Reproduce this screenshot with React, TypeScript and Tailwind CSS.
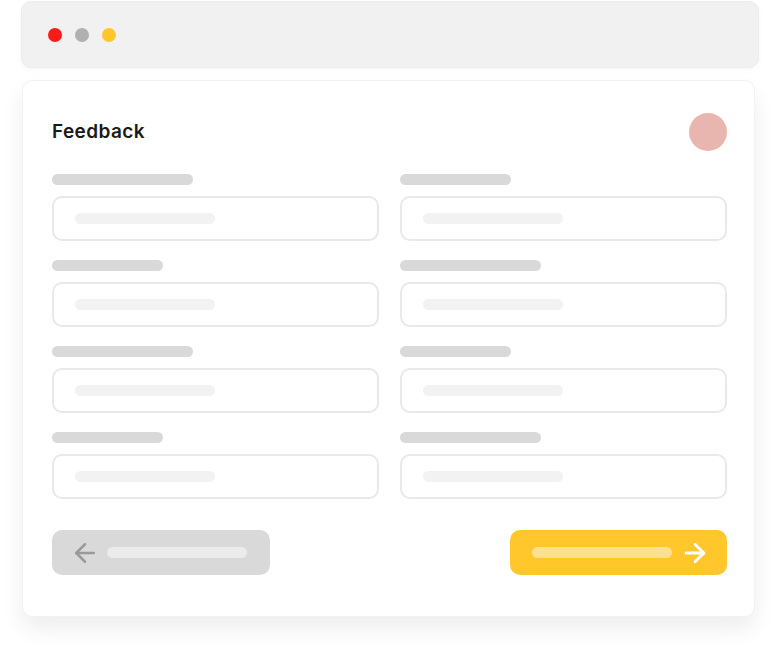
import { ArrowLeft, ArrowRight } from "lucide-react";

const rows = [
  { left: 141, right: 111 },
  { left: 111, right: 141 },
  { left: 141, right: 111 },
  { left: 111, right: 141 },
];

function Field({ label }: { label: number }) {
  return (
    <div className="flex flex-col gap-[11px]">
      <div className="h-[11px] rounded-full bg-[#d9d9d9]" style={{ width: label }} />
      <div className="h-[45px] rounded-[10px] border-2 border-[#e9e9e9] bg-white flex items-center pl-[21px]">
        <div className="h-[11px] w-[140px] rounded-full bg-[#f2f2f2]" />
      </div>
    </div>
  );
}

export default function App() {
  return (
    <div className="w-[778px] h-[655px] bg-white pl-[21px] pt-px font-['Inter',sans-serif]">
      <div className="w-[738px] h-[67px] rounded-[10px] bg-[#f1f1f1] border border-[#ececec] shadow-[0_2px_6px_rgba(0,0,0,0.03)] flex items-center gap-[13px] pl-[26px]">
        <span className="w-[14px] h-[14px] rounded-full bg-[#ff1a1a]" />
        <span className="w-[14px] h-[14px] rounded-full bg-[#b0b0b0]" />
        <span className="w-[14px] h-[14px] rounded-full bg-[#ffc72c]" />
      </div>

      <div className="ml-px mt-[12px] w-[733px] h-[537px] rounded-[10px] bg-white border border-[#f2f2f2] shadow-[0_12px_22px_rgba(0,0,0,0.07)] pt-[32px] pl-[29px] pr-[27px]">
        <div className="flex items-center justify-between h-[38px]">
          <h1 className="text-[19px] font-semibold text-[#1a1a1a] tracking-[0.4px]">Feedback</h1>
          <div className="w-[38px] h-[38px] rounded-full bg-[#e8b6ae]" />
        </div>

        <div className="mt-[23px] flex flex-col gap-[19px]">
          {rows.map((r, i) => (
            <div key={i} className="grid grid-cols-2 gap-[21px]">
              <Field label={r.left} />
              <Field label={r.right} />
            </div>
          ))}
        </div>

        <div className="mt-[31px] flex items-center justify-between">
          <button className="w-[218px] h-[45px] rounded-[10px] bg-[#d9d9d9] flex items-center pl-[18px] gap-[7px]">
            <ArrowLeft className="w-[30px] h-[30px] text-[#9a9a9a]" strokeWidth={2} />
            <span className="h-[11px] w-[140px] rounded-full bg-[#ebebeb]" />
          </button>
          <button className="w-[217px] h-[45px] rounded-[10px] bg-[#ffc72c] flex items-center pl-[22px] gap-[8px]">
            <span className="h-[11px] w-[140px] rounded-full bg-[#ffe08f]" />
            <ArrowRight className="w-[30px] h-[30px] text-white" strokeWidth={2.4} />
          </button>
        </div>
      </div>
    </div>
  );
}
